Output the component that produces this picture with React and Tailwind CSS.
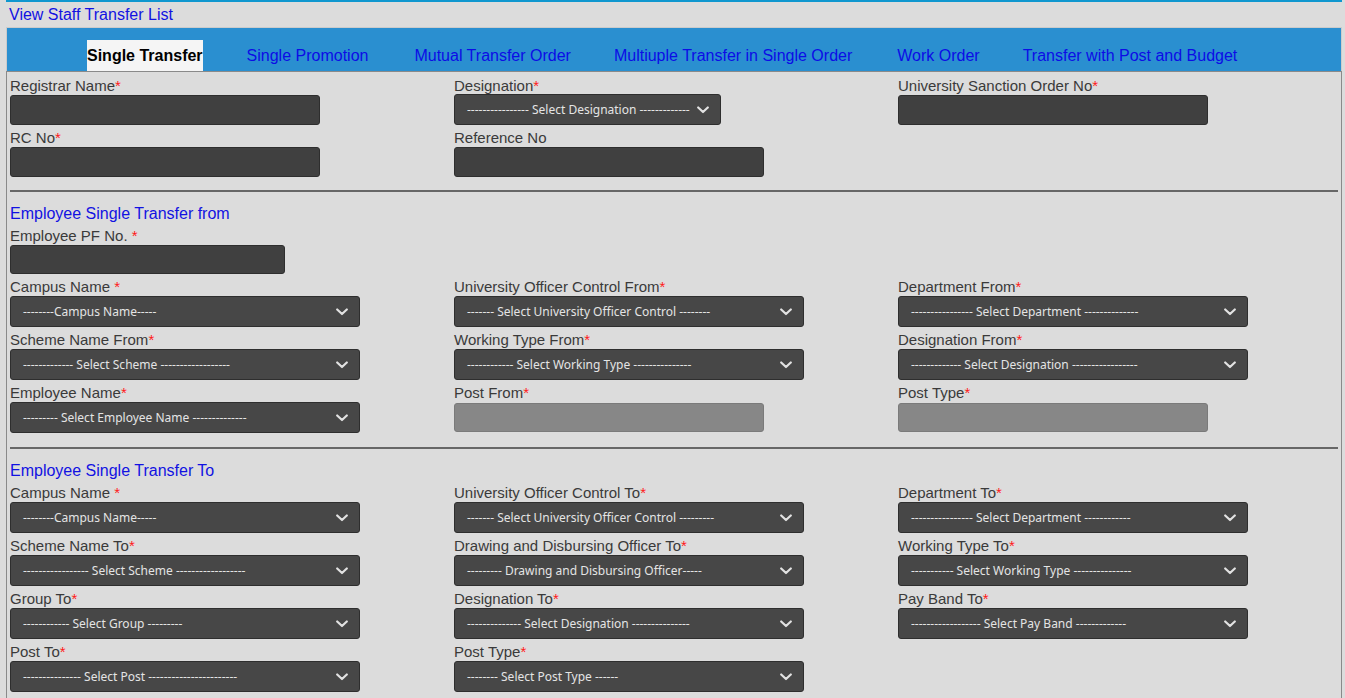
import React from "react";

function Chevron() {
  return (
    <svg width="12" height="8" viewBox="0 0 12 8" className="shrink-0">
      <path d="M1.2 1.5 L6 6 L10.8 1.5" fill="none" stroke="#e2e2e2" strokeWidth="2.2" strokeLinecap="round" strokeLinejoin="round" />
    </svg>
  );
}

function Label({ text, req, space }) {
  return (
    <div className="h-[18px] leading-[18px] text-[15px] text-[#3a3a3a] whitespace-nowrap">
      {text}
      {req && <span className="text-[#ff1a1a]">{space ? " *" : "*"}</span>}
    </div>
  );
}

function Select({ text, narrow, up }) {
  return (
    <div
      className={
        (narrow ? "w-[267px] " : "w-[350px] ") +
        (up ? "-mt-px " : "") +
        "h-[31px] bg-[#474747] border border-[#2e2e2e] rounded-[3px] flex items-center justify-between pl-[12px] pr-[11px] text-[12px] text-[#e4e4e4] font-['Noto_Sans',sans-serif] whitespace-nowrap"
      }
    >
      <span>{text}</span>
      <Chevron />
    </div>
  );
}

function Input({ w = "w-[310px]", h = "h-[30px]", gray, off }) {
  return (
    <div
      className={
        w +
        " " +
        h +
        (off ? " mt-px" : "") +
        " rounded-[3px] border " +
        (gray ? "bg-[#878787] border-[#7a7a7a]" : "bg-[#404040] border-[#2e2e2e]")
      }
    />
  );
}

function Field({ label, req = true, space, children }) {
  return (
    <div className="flex flex-col items-start">
      <Label text={label} req={req} space={space} />
      {children}
    </div>
  );
}

function Divider({ mt = "mt-[13px]" }) {
  return <div className={mt + " h-[2px] bg-[#676767]"} />;
}

function Title({ children }) {
  return <div className="mt-[13px] h-[18px] leading-[18px] text-[16px] text-[#1212e2]">{children}</div>;
}

const grid = "grid grid-cols-[444px_444px_1fr] gap-y-[4px]";

export default function App() {
  const tabs = [
    ["Single Promotion", "ml-[44px]"],
    ["Mutual Transfer Order", "ml-[46px]"],
    ["Multiuple Transfer in Single Order", "ml-[43px]"],
    ["Work Order", "ml-[45px]"],
    ["Transfer with Post and Budget", "ml-[43px]"],
  ];
  return (
    <div className="min-h-screen w-full bg-[#dcdcdc] font-['Liberation_Sans',Arial,sans-serif] pb-[20px]">
      <div className="ml-[6px] mr-[3px] border-t-2 border-[#0f97cf]">
        <div className="h-[25px] flex items-center pl-[3px] text-[16px] text-[#1212e2]">View Staff Transfer List</div>
        <div className="h-[44px] border-t border-x border-[#cbcbcb] bg-[#2a8fd0] flex items-end pl-[80px]">
          <div className="h-[31px] leading-[31px] bg-[#f5f5f5] text-[16px] font-bold text-black">Single Transfer</div>
          {tabs.map(([t, m]) => (
            <div key={t} className={m + " h-[31px] leading-[31px] text-[16px] text-[#0c0ce6] whitespace-nowrap"}>
              {t}
            </div>
          ))}
        </div>
        <div className="border border-[#8a8a8a] pt-[5px] pl-[3px] pr-[3px] pb-[10px]">
          <div className={grid}>
            <Field label="Registrar Name"><Input /></Field>
            <Field label="Designation"><Select narrow up text="---------------- Select Designation -------------" /></Field>
            <Field label="University Sanction Order No"><Input /></Field>
            <Field label="RC No"><Input /></Field>
            <Field label="Reference No" req={false}><Input /></Field>
            <div />
          </div>
          <Divider />
          <Title>Employee Single Transfer from</Title>
          <div className="mt-[4px]">
            <div className={grid}>
              <Field label="Employee PF No." space><Input w="w-[275px]" h="h-[29px]" /></Field>
              <div />
              <div />
              <Field label="Campus Name" space><Select text="--------Campus Name-----" /></Field>
              <Field label="University Officer Control From"><Select text="------- Select University Officer Control --------" /></Field>
              <Field label="Department From"><Select text="---------------- Select Department --------------" /></Field>
              <Field label="Scheme Name From"><Select text="------------- Select Scheme ------------------" /></Field>
              <Field label="Working Type From"><Select text="------------ Select Working Type ---------------" /></Field>
              <Field label="Designation From"><Select text="------------- Select Designation -----------------" /></Field>
              <Field label="Employee Name"><Select text="--------- Select Employee Name --------------" /></Field>
              <Field label="Post From"><Input gray off h="h-[29px]" /></Field>
              <Field label="Post Type"><Input gray off h="h-[29px]" /></Field>
            </div>
          </div>
          <Divider mt="mt-[14px]" />
          <Title>Employee Single Transfer To</Title>
          <div className="mt-[4px]">
            <div className={grid}>
              <Field label="Campus Name" space><Select text="--------Campus Name-----" /></Field>
              <Field label="University Officer Control To"><Select text="------- Select University Officer Control ---------" /></Field>
              <Field label="Department To"><Select text="---------------- Select Department ------------" /></Field>
              <Field label="Scheme Name To"><Select text="----------------- Select Scheme ------------------" /></Field>
              <Field label="Drawing and Disbursing Officer To"><Select text="--------- Drawing and Disbursing Officer-----" /></Field>
              <Field label="Working Type To"><Select text="----------- Select Working Type ---------------" /></Field>
              <Field label="Group To"><Select text="------------ Select Group ---------" /></Field>
              <Field label="Designation To"><Select text="-------------- Select Designation ---------------" /></Field>
              <Field label="Pay Band To"><Select text="------------------ Select Pay Band -------------" /></Field>
              <Field label="Post To"><Select text="--------------- Select Post -----------------------" /></Field>
              <Field label="Post Type"><Select text="-------- Select Post Type ------" /></Field>
              <div />
            </div>
          </div>
        </div>
      </div>
    </div>
  );
}
